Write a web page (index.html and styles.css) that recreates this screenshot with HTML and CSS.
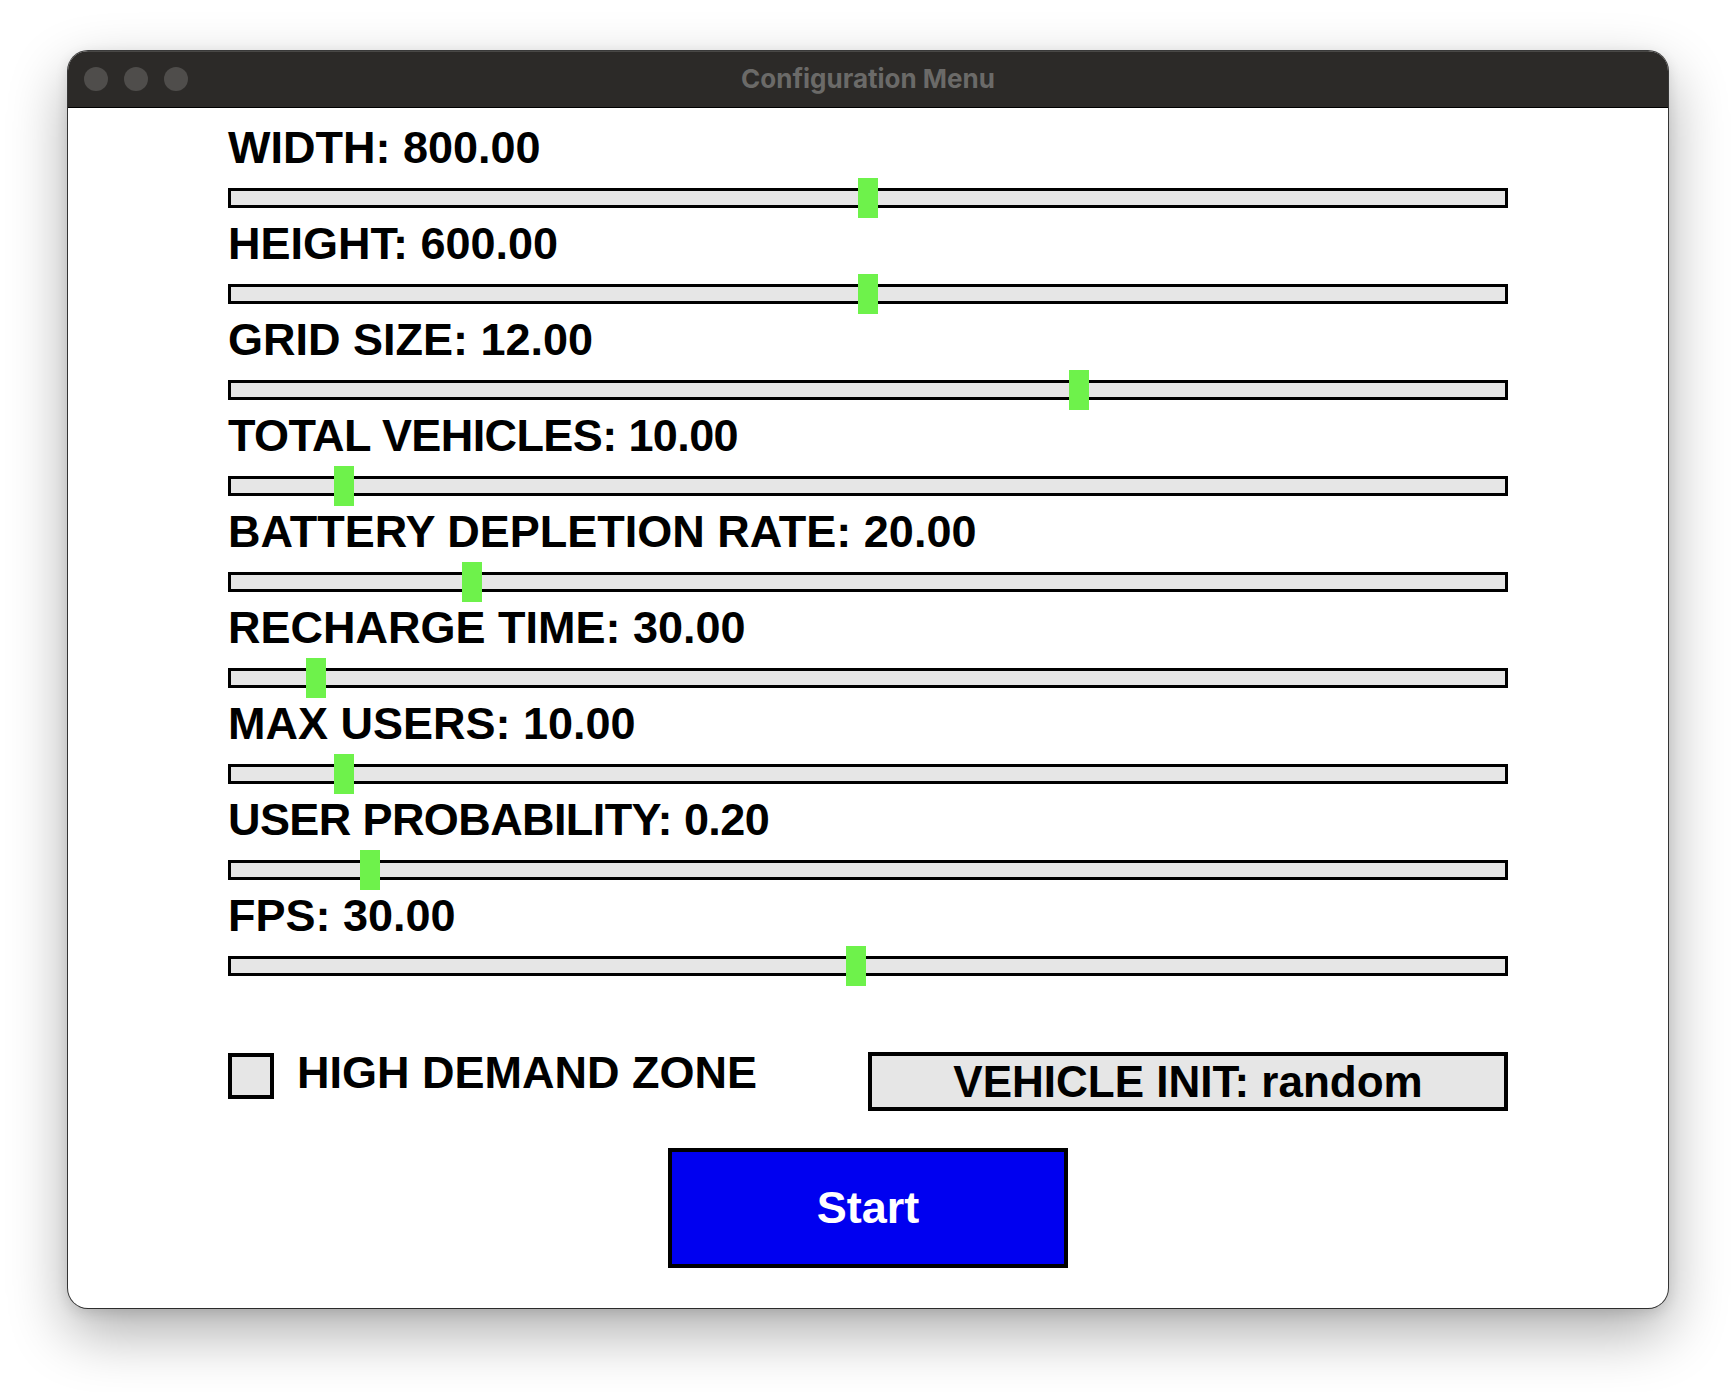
FILE: index.html
```html
<!DOCTYPE html>
<html lang="en">
<head>
<meta charset="utf-8">
<title>Configuration Menu</title>
<link rel="stylesheet" href="styles.css">
</head>
<body>
<div class="window">
  <div class="titlebar">
    <div class="lights">
      <span class="light"></span><span class="light"></span><span class="light"></span>
    </div>
    <div class="title">Configuration Menu</div>
  </div>
  <div class="content">
    <div class="sliders">
      <div class="row">
        <div class="label">WIDTH: 800.00</div>
        <div class="slider"><div class="track"></div><div class="thumb" style="left: calc(50% - 10px)"></div></div>
      </div>
      <div class="row">
        <div class="label">HEIGHT: 600.00</div>
        <div class="slider"><div class="track"></div><div class="thumb" style="left: calc(50% - 10px)"></div></div>
      </div>
      <div class="row">
        <div class="label">GRID SIZE: 12.00</div>
        <div class="slider"><div class="track"></div><div class="thumb" style="left: calc(66.5% - 10px)"></div></div>
      </div>
      <div class="row">
        <div class="label tight">TOTAL VEHICLES: 10.00</div>
        <div class="slider"><div class="track"></div><div class="thumb" style="left: calc(9.09% - 10px)"></div></div>
      </div>
      <div class="row">
        <div class="label">BATTERY DEPLETION RATE: 20.00</div>
        <div class="slider"><div class="track"></div><div class="thumb" style="left: calc(19.1% - 10px)"></div></div>
      </div>
      <div class="row">
        <div class="label">RECHARGE TIME: 30.00</div>
        <div class="slider"><div class="track"></div><div class="thumb" style="left: calc(6.9% - 10px)"></div></div>
      </div>
      <div class="row">
        <div class="label">MAX USERS: 10.00</div>
        <div class="slider"><div class="track"></div><div class="thumb" style="left: calc(9.09% - 10px)"></div></div>
      </div>
      <div class="row">
        <div class="label tight">USER PROBABILITY: 0.20</div>
        <div class="slider"><div class="track"></div><div class="thumb" style="left: calc(11.1% - 10px)"></div></div>
      </div>
      <div class="row">
        <div class="label">FPS: 30.00</div>
        <div class="slider"><div class="track"></div><div class="thumb" style="left: calc(49.1% - 10px)"></div></div>
      </div>
    </div>
    <div class="options">
      <div class="check-group">
        <span class="checkbox"></span>
        <span class="check-label">HIGH DEMAND ZONE</span>
      </div>
      <div class="select-btn">VEHICLE INIT: random</div>
    </div>
    <div class="start-wrap">
      <div class="start-btn">Start</div>
    </div>
  </div>
</div>
</body>
</html>
```

FILE: styles.css
```css
* { box-sizing: border-box; }

html, body {
  margin: 0;
  padding: 0;
  background: #ffffff;
}

body {
  width: 1736px;
  height: 1392px;
  overflow: hidden;
  padding-top: 51px;
  padding-left: 68px;
}

.window {
  width: 1600px;
  height: 1257px;
  border-radius: 20px;
  overflow: hidden;
  background: #ffffff;
  box-shadow: 0 0 0 1px rgba(0, 0, 0, 0.75), 0 24px 60px rgba(0, 0, 0, 0.33), 0 4px 14px rgba(0, 0, 0, 0.12);
  display: flex;
  flex-direction: column;
}

.titlebar {
  height: 57px;
  flex: none;
  background: #2c2a28;
  border-bottom: 1px solid #000;
  box-shadow: inset 0 1px 0 rgba(255, 255, 255, 0.14);
  position: relative;
  display: flex;
  align-items: center;
  justify-content: center;
}

.lights {
  position: absolute;
  left: 16px;
  top: 16px;
  display: flex;
  gap: 16px;
}

.light {
  width: 24px;
  height: 24px;
  border-radius: 50%;
  background: #4f4d4b;
}

.title {
  font-family: "Inter", "Noto Sans", sans-serif;
  font-weight: 700;
  font-size: 26px;
  color: #6b6a68;
  line-height: 1;
  margin-top: -1px;
}

.content {
  flex: 1;
  padding: 17px 160px 0;
  font-family: "Liberation Sans", Arial, sans-serif;
  font-weight: 700;
  color: #000;
}

.sliders {
  display: flex;
  flex-direction: column;
  gap: 3px;
}

.row {
  display: flex;
  flex-direction: column;
}

.label {
  font-size: 45px;
  line-height: 45px;
  height: 45px;
  margin-bottom: 8px;
  white-space: nowrap;
}

.label.tight {
  letter-spacing: -0.6px;
}

.slider {
  position: relative;
  width: 1280px;
  height: 40px;
}

.track {
  margin-top: 10px;
  height: 20px;
  border: 3px solid #000;
  background: #e6e6e6;
}

.thumb {
  position: absolute;
  top: 0;
  width: 20px;
  height: 40px;
  background: #6ef24b;
}

.options {
  margin-top: 64px;
  display: flex;
  justify-content: space-between;
  align-items: flex-start;
}

.check-group {
  display: flex;
  align-items: flex-start;
  gap: 23px;
}

.checkbox {
  width: 46px;
  height: 46px;
  margin-top: 3px;
  border: 4px solid #000;
  background: #e6e6e6;
}

.check-label {
  font-size: 45px;
  line-height: 45px;
  white-space: nowrap;
}

.select-btn {
  width: 640px;
  height: 59px;
  margin-top: 2px;
  border: 4px solid #000;
  background: #e6e6e6;
  display: flex;
  align-items: center;
  justify-content: center;
  font-size: 44px;
  line-height: 44px;
  white-space: nowrap;
}

.start-wrap {
  display: flex;
  justify-content: center;
  margin-top: 37px;
}

.start-btn {
  width: 400px;
  height: 120px;
  border: 4px solid #000;
  background: #0000f0;
  color: #ffffff;
  display: flex;
  align-items: center;
  justify-content: center;
  font-size: 45px;
  line-height: 45px;
  padding-bottom: 2px;
}
```
